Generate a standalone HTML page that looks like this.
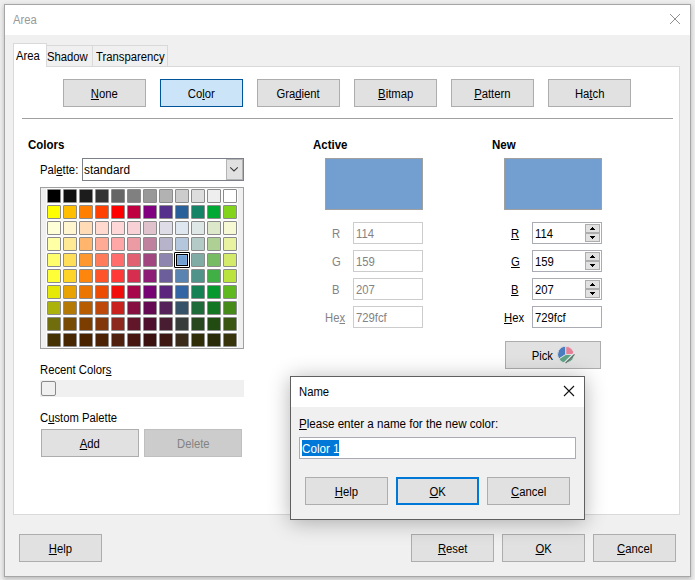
<!DOCTYPE html>
<html><head><meta charset="utf-8">
<style>
*{box-sizing:border-box;margin:0;padding:0}
html,body{width:695px;height:580px;overflow:hidden;background:#eeeeee;font-family:"Liberation Sans",sans-serif;font-size:11.5px;color:#000}
.a{position:absolute}
.t{position:absolute;white-space:nowrap;line-height:14px;font-size:12px;transform:scaleX(0.94);transform-origin:0 0}
.s{display:inline-block;transform:scaleX(0.94)}
.sl{display:inline-block;transform:scaleX(0.94);transform-origin:0 0}
.btn{position:absolute;background:#e1e1e1;border:1px solid #adadad;text-align:center;line-height:28px;height:28px;width:83px;white-space:nowrap;font-size:12px}
.u{text-decoration:underline;text-underline-offset:0.5px;text-decoration-thickness:1px}
.bold{font-weight:bold;font-size:12.5px;transform:scaleX(0.92);transform-origin:0 0}
.field{position:absolute;background:#fff;border:1px solid #a9acb3;height:22px;width:70px;line-height:22px;padding-left:2px;font-size:12px}
.dis{border-color:#cccccc;color:#838383}
.dt{color:#838383}
.sw{position:absolute;width:16px;height:16px;background:#fdfdfd;border-radius:2px}
.sw i{position:absolute;left:1px;top:1px;width:14px;height:14px;border:1px solid #8c8c8c;border-radius:1px}
.sp{position:absolute;left:585px;width:15px;height:9px;background:#e1e1e1;border:1px solid #adadad}
</style></head><body>
<!-- shadow / main window -->
<div class="a" style="left:4px;top:4px;width:687px;height:573px;border:1px solid #a6a6a6;background:#f0f0f0;box-shadow:0 1px 4px 1px rgba(0,0,0,0.1),0 3px 4px rgba(0,0,0,0.1)"></div>
<div class="a" style="left:5px;top:5px;width:685px;height:30px;background:#fff"></div>
<div class="t" style="left:13px;top:13px;color:#999">Area</div>
<svg class="a" style="left:669px;top:13px" width="12" height="12" viewBox="0 0 12 12"><path d="M1 1L11 11M11 1L1 11" stroke="#909090" stroke-width="1"/></svg>

<!-- tabs -->
<div class="a" style="left:13px;top:66px;width:667px;height:449px;background:#fff;border:1px solid #d9d9d9"></div>
<div class="a" style="left:46px;top:45px;width:47px;height:22px;background:#f0f0f0;border:1px solid #d9d9d9"></div>
<div class="a" style="left:92px;top:45px;width:76px;height:22px;background:#f0f0f0;border:1px solid #d9d9d9"></div>
<div class="a" style="left:13px;top:43px;width:34px;height:24px;background:#fff;border:1px solid #d9d9d9;border-bottom:none"></div>
<div class="t" style="left:16px;top:49px">Area</div>
<div class="t" style="left:47px;top:50px">Shadow</div>
<div class="t" style="left:96px;top:50px">Transparency</div>

<!-- type buttons -->
<div class="btn" style="left:63px;top:79px"><b class="s" style="font-weight:normal"><span class="u">N</span>one</b></div>
<div class="btn" style="left:160px;top:79px;background:#cce4f7;border-color:#005499"><b class="s" style="font-weight:normal">Co<span class="u">l</span>or</b></div>
<div class="btn" style="left:257px;top:79px"><b class="s" style="font-weight:normal">Gra<span class="u">d</span>ient</b></div>
<div class="btn" style="left:354px;top:79px"><b class="s" style="font-weight:normal"><span class="u">B</span>itmap</b></div>
<div class="btn" style="left:451px;top:79px"><b class="s" style="font-weight:normal"><span class="u">P</span>attern</b></div>
<div class="btn" style="left:548px;top:79px"><b class="s" style="font-weight:normal">Ha<span class="u">t</span>ch</b></div>
<div class="a" style="left:22px;top:118px;width:651px;height:1px;background:#a0a0a0"></div>

<!-- Colors -->
<div class="t bold" style="left:28px;top:138px">Colors</div>
<div class="t" style="left:40px;top:163px">Pal<span class="u">e</span>tte:</div>
<div class="a" style="left:82px;top:158px;width:162px;height:23px;background:#fff;border:1px solid #7b8089"></div>
<div class="t" style="left:84px;top:163px;transform:scaleX(0.985)">standard</div>
<div class="a" style="left:226px;top:159px;width:17px;height:21px;background:#e1e1e1;border:1px solid #b4b4b4"></div>
<svg class="a" style="left:229px;top:166px" width="10" height="7" viewBox="0 0 10 7"><path d="M1.2 1.4L5 5L8.8 1.4" stroke="#3a3a3a" fill="none" stroke-width="1.05"/></svg>

<div class="a" style="left:40px;top:187px;width:204px;height:162px;background:#f0f0f0;border:1px solid #a0a0a0"></div>
<div class="sw" style="left:46px;top:188px"><i style="background:#000000"></i></div>
<div class="sw" style="left:62px;top:188px"><i style="background:#111111"></i></div>
<div class="sw" style="left:78px;top:188px"><i style="background:#1c1c1c"></i></div>
<div class="sw" style="left:94px;top:188px"><i style="background:#333333"></i></div>
<div class="sw" style="left:110px;top:188px"><i style="background:#666666"></i></div>
<div class="sw" style="left:126px;top:188px"><i style="background:#808080"></i></div>
<div class="sw" style="left:142px;top:188px"><i style="background:#999999"></i></div>
<div class="sw" style="left:158px;top:188px"><i style="background:#b2b2b2"></i></div>
<div class="sw" style="left:174px;top:188px"><i style="background:#cccccc"></i></div>
<div class="sw" style="left:190px;top:188px"><i style="background:#dddddd"></i></div>
<div class="sw" style="left:206px;top:188px"><i style="background:#eeeeee"></i></div>
<div class="sw" style="left:222px;top:188px"><i style="background:#ffffff"></i></div>
<div class="sw" style="left:46px;top:204px"><i style="background:#ffff00"></i></div>
<div class="sw" style="left:62px;top:204px"><i style="background:#ffbf00"></i></div>
<div class="sw" style="left:78px;top:204px"><i style="background:#ff8000"></i></div>
<div class="sw" style="left:94px;top:204px"><i style="background:#ff4000"></i></div>
<div class="sw" style="left:110px;top:204px"><i style="background:#ff0000"></i></div>
<div class="sw" style="left:126px;top:204px"><i style="background:#bf0041"></i></div>
<div class="sw" style="left:142px;top:204px"><i style="background:#800080"></i></div>
<div class="sw" style="left:158px;top:204px"><i style="background:#55308d"></i></div>
<div class="sw" style="left:174px;top:204px"><i style="background:#2a6099"></i></div>
<div class="sw" style="left:190px;top:204px"><i style="background:#158466"></i></div>
<div class="sw" style="left:206px;top:204px"><i style="background:#00a933"></i></div>
<div class="sw" style="left:222px;top:204px"><i style="background:#81d41a"></i></div>
<div class="sw" style="left:46px;top:220px"><i style="background:#ffffd7"></i></div>
<div class="sw" style="left:62px;top:220px"><i style="background:#fff5ce"></i></div>
<div class="sw" style="left:78px;top:220px"><i style="background:#ffdbb6"></i></div>
<div class="sw" style="left:94px;top:220px"><i style="background:#ffd8ce"></i></div>
<div class="sw" style="left:110px;top:220px"><i style="background:#ffd7d7"></i></div>
<div class="sw" style="left:126px;top:220px"><i style="background:#f7d1d5"></i></div>
<div class="sw" style="left:142px;top:220px"><i style="background:#e0c2cd"></i></div>
<div class="sw" style="left:158px;top:220px"><i style="background:#dedce6"></i></div>
<div class="sw" style="left:174px;top:220px"><i style="background:#dee6ef"></i></div>
<div class="sw" style="left:190px;top:220px"><i style="background:#dee7e5"></i></div>
<div class="sw" style="left:206px;top:220px"><i style="background:#dde8cb"></i></div>
<div class="sw" style="left:222px;top:220px"><i style="background:#f6f9d4"></i></div>
<div class="sw" style="left:46px;top:236px"><i style="background:#ffffa6"></i></div>
<div class="sw" style="left:62px;top:236px"><i style="background:#ffe994"></i></div>
<div class="sw" style="left:78px;top:236px"><i style="background:#ffb66c"></i></div>
<div class="sw" style="left:94px;top:236px"><i style="background:#ffaa95"></i></div>
<div class="sw" style="left:110px;top:236px"><i style="background:#ffa6a6"></i></div>
<div class="sw" style="left:126px;top:236px"><i style="background:#ec9ba4"></i></div>
<div class="sw" style="left:142px;top:236px"><i style="background:#bf819e"></i></div>
<div class="sw" style="left:158px;top:236px"><i style="background:#b7b3ca"></i></div>
<div class="sw" style="left:174px;top:236px"><i style="background:#b4c7dc"></i></div>
<div class="sw" style="left:190px;top:236px"><i style="background:#b3cac7"></i></div>
<div class="sw" style="left:206px;top:236px"><i style="background:#afd095"></i></div>
<div class="sw" style="left:222px;top:236px"><i style="background:#e8f2a1"></i></div>
<div class="sw" style="left:46px;top:252px"><i style="background:#ffff6d"></i></div>
<div class="sw" style="left:62px;top:252px"><i style="background:#ffde59"></i></div>
<div class="sw" style="left:78px;top:252px"><i style="background:#ff972f"></i></div>
<div class="sw" style="left:94px;top:252px"><i style="background:#ff7b59"></i></div>
<div class="sw" style="left:110px;top:252px"><i style="background:#ff6d6d"></i></div>
<div class="sw" style="left:126px;top:252px"><i style="background:#e16173"></i></div>
<div class="sw" style="left:142px;top:252px"><i style="background:#a1467e"></i></div>
<div class="sw" style="left:158px;top:252px"><i style="background:#8e86ae"></i></div>
<div class="sw" style="left:174px;top:252px"><i style="background:#729fcf"></i></div>
<div class="sw" style="left:190px;top:252px"><i style="background:#81aca6"></i></div>
<div class="sw" style="left:206px;top:252px"><i style="background:#77bc65"></i></div>
<div class="sw" style="left:222px;top:252px"><i style="background:#d4ea6b"></i></div>
<div class="sw" style="left:46px;top:268px"><i style="background:#ffff38"></i></div>
<div class="sw" style="left:62px;top:268px"><i style="background:#ffd428"></i></div>
<div class="sw" style="left:78px;top:268px"><i style="background:#ff860d"></i></div>
<div class="sw" style="left:94px;top:268px"><i style="background:#ff5429"></i></div>
<div class="sw" style="left:110px;top:268px"><i style="background:#ff3838"></i></div>
<div class="sw" style="left:126px;top:268px"><i style="background:#d62e4e"></i></div>
<div class="sw" style="left:142px;top:268px"><i style="background:#8d1d75"></i></div>
<div class="sw" style="left:158px;top:268px"><i style="background:#6b5e9b"></i></div>
<div class="sw" style="left:174px;top:268px"><i style="background:#5983b0"></i></div>
<div class="sw" style="left:190px;top:268px"><i style="background:#50938a"></i></div>
<div class="sw" style="left:206px;top:268px"><i style="background:#3faf46"></i></div>
<div class="sw" style="left:222px;top:268px"><i style="background:#bbe33d"></i></div>
<div class="sw" style="left:46px;top:284px"><i style="background:#e6e905"></i></div>
<div class="sw" style="left:62px;top:284px"><i style="background:#e8a202"></i></div>
<div class="sw" style="left:78px;top:284px"><i style="background:#ea7500"></i></div>
<div class="sw" style="left:94px;top:284px"><i style="background:#ed4c05"></i></div>
<div class="sw" style="left:110px;top:284px"><i style="background:#f10d0c"></i></div>
<div class="sw" style="left:126px;top:284px"><i style="background:#a7074b"></i></div>
<div class="sw" style="left:142px;top:284px"><i style="background:#780373"></i></div>
<div class="sw" style="left:158px;top:284px"><i style="background:#5b277d"></i></div>
<div class="sw" style="left:174px;top:284px"><i style="background:#3465a4"></i></div>
<div class="sw" style="left:190px;top:284px"><i style="background:#168253"></i></div>
<div class="sw" style="left:206px;top:284px"><i style="background:#069a2e"></i></div>
<div class="sw" style="left:222px;top:284px"><i style="background:#5eb91e"></i></div>
<div class="sw" style="left:46px;top:300px"><i style="background:#acb20c"></i></div>
<div class="sw" style="left:62px;top:300px"><i style="background:#b47804"></i></div>
<div class="sw" style="left:78px;top:300px"><i style="background:#b85c00"></i></div>
<div class="sw" style="left:94px;top:300px"><i style="background:#be480a"></i></div>
<div class="sw" style="left:110px;top:300px"><i style="background:#c9211e"></i></div>
<div class="sw" style="left:126px;top:300px"><i style="background:#861141"></i></div>
<div class="sw" style="left:142px;top:300px"><i style="background:#650953"></i></div>
<div class="sw" style="left:158px;top:300px"><i style="background:#55215b"></i></div>
<div class="sw" style="left:174px;top:300px"><i style="background:#355269"></i></div>
<div class="sw" style="left:190px;top:300px"><i style="background:#1e6a39"></i></div>
<div class="sw" style="left:206px;top:300px"><i style="background:#127622"></i></div>
<div class="sw" style="left:222px;top:300px"><i style="background:#468a1a"></i></div>
<div class="sw" style="left:46px;top:316px"><i style="background:#706e0c"></i></div>
<div class="sw" style="left:62px;top:316px"><i style="background:#784b04"></i></div>
<div class="sw" style="left:78px;top:316px"><i style="background:#7b3d00"></i></div>
<div class="sw" style="left:94px;top:316px"><i style="background:#813709"></i></div>
<div class="sw" style="left:110px;top:316px"><i style="background:#8d281e"></i></div>
<div class="sw" style="left:126px;top:316px"><i style="background:#611729"></i></div>
<div class="sw" style="left:142px;top:316px"><i style="background:#4e102d"></i></div>
<div class="sw" style="left:158px;top:316px"><i style="background:#481d32"></i></div>
<div class="sw" style="left:174px;top:316px"><i style="background:#383d3c"></i></div>
<div class="sw" style="left:190px;top:316px"><i style="background:#28471f"></i></div>
<div class="sw" style="left:206px;top:316px"><i style="background:#224b12"></i></div>
<div class="sw" style="left:222px;top:316px"><i style="background:#395511"></i></div>
<div class="sw" style="left:46px;top:332px"><i style="background:#443205"></i></div>
<div class="sw" style="left:62px;top:332px"><i style="background:#472702"></i></div>
<div class="sw" style="left:78px;top:332px"><i style="background:#492300"></i></div>
<div class="sw" style="left:94px;top:332px"><i style="background:#4b2204"></i></div>
<div class="sw" style="left:110px;top:332px"><i style="background:#50200f"></i></div>
<div class="sw" style="left:126px;top:332px"><i style="background:#461711"></i></div>
<div class="sw" style="left:142px;top:332px"><i style="background:#3a110e"></i></div>
<div class="sw" style="left:158px;top:332px"><i style="background:#3d1711"></i></div>
<div class="sw" style="left:174px;top:332px"><i style="background:#3a2a1a"></i></div>
<div class="sw" style="left:190px;top:332px"><i style="background:#302d09"></i></div>
<div class="sw" style="left:206px;top:332px"><i style="background:#2a2c09"></i></div>
<div class="sw" style="left:222px;top:332px"><i style="background:#37330a"></i></div>
<div class="a" style="left:174px;top:252px;width:16px;height:16px;border:1px solid #000;background:#fff;border-radius:1px"></div>
<div class="a" style="left:176px;top:254px;width:12px;height:12px;border:1px solid #000;background:#729fcf;box-shadow:inset 0 0 0 1px #80ade2"></div>

<div class="t" style="left:40px;top:363px">Recent Color<span class="u">s</span></div>
<div class="a" style="left:40px;top:380px;width:204px;height:17px;background:#f0f0f0"></div>
<div class="a" style="left:41px;top:381px;width:15px;height:15px;border:1px solid #8a8a8a;border-radius:2px"></div>

<div class="t" style="left:40px;top:411px">C<span class="u">u</span>stom Palette</div>
<div class="btn" style="left:41px;top:429px;width:98px"><b class="s" style="font-weight:normal"><span class="u">A</span>dd</b></div>
<div class="btn dt" style="left:144px;top:429px;width:98px;background:#cccccc;border-color:#bfbfbf"><b class="s" style="font-weight:normal">Delete</b></div>

<!-- Active -->
<div class="t bold" style="left:313px;top:138px">Active</div>
<div class="a" style="left:325px;top:158px;width:98px;height:52px;background:#729fcf;border:1px solid #a0a0a0"></div>
<div class="t dt" style="left:332px;top:227px">R</div>
<div class="t dt" style="left:332px;top:255px">G</div>
<div class="t dt" style="left:332px;top:283px">B</div>
<div class="t dt" style="left:325px;top:311px">He<span class="u">x</span></div>
<div class="field dis" style="left:353px;top:222px"><span class="sl">114</span></div>
<div class="field dis" style="left:353px;top:250px"><span class="sl">159</span></div>
<div class="field dis" style="left:353px;top:278px"><span class="sl">207</span></div>
<div class="field dis" style="left:353px;top:306px"><span class="sl">729fcf</span></div>

<!-- New -->
<div class="t bold" style="left:492px;top:138px">New</div>
<div class="a" style="left:504px;top:158px;width:98px;height:52px;background:#729fcf;border:1px solid #a0a0a0"></div>
<div class="t" style="left:511px;top:227px"><span class="u">R</span></div>
<div class="t" style="left:511px;top:255px"><span class="u">G</span></div>
<div class="t" style="left:511px;top:283px"><span class="u">B</span></div>
<div class="t" style="left:504px;top:311px"><span class="u">H</span>ex</div>
<div class="field" style="left:532px;top:222px"><span class="sl">114</span></div>
<div class="field" style="left:532px;top:250px"><span class="sl">159</span></div>
<div class="field" style="left:532px;top:278px"><span class="sl">207</span></div>
<div class="field" style="left:532px;top:306px"><span class="sl">729fcf</span></div>
<div class="sp" style="top:224px"></div><div class="sp" style="top:233px"></div><svg class="a" style="left:589px;top:226px" width="7" height="14" shape-rendering="crispEdges"><rect x="3" y="1" width="1" height="1"/><rect x="2" y="2" width="3" height="1"/><rect x="1" y="3" width="5" height="1"/><rect x="0.5" y="3.5" width="6" height="0.5" fill-opacity="0"/><rect x="1" y="10" width="5" height="1"/><rect x="2" y="11" width="3" height="1"/><rect x="3" y="12" width="1" height="1"/></svg>
<div class="sp" style="top:252px"></div><div class="sp" style="top:261px"></div><svg class="a" style="left:589px;top:254px" width="7" height="14" shape-rendering="crispEdges"><rect x="3" y="1" width="1" height="1"/><rect x="2" y="2" width="3" height="1"/><rect x="1" y="3" width="5" height="1"/><rect x="0.5" y="3.5" width="6" height="0.5" fill-opacity="0"/><rect x="1" y="10" width="5" height="1"/><rect x="2" y="11" width="3" height="1"/><rect x="3" y="12" width="1" height="1"/></svg>
<div class="sp" style="top:280px"></div><div class="sp" style="top:289px"></div><svg class="a" style="left:589px;top:282px" width="7" height="14" shape-rendering="crispEdges"><rect x="3" y="1" width="1" height="1"/><rect x="2" y="2" width="3" height="1"/><rect x="1" y="3" width="5" height="1"/><rect x="0.5" y="3.5" width="6" height="0.5" fill-opacity="0"/><rect x="1" y="10" width="5" height="1"/><rect x="2" y="11" width="3" height="1"/><rect x="3" y="12" width="1" height="1"/></svg>

<div class="btn" style="left:505px;top:341px;width:96px;text-align:left;padding-left:25px"><b class="s" style="font-weight:normal">Pick</b></div>
<svg class="a" style="left:555px;top:344px" width="22" height="22" viewBox="0 0 22 22">
<path d="M10.8 10.5L10.8 2.3A8.2 8.2 0 0 0 3.9 15Z" fill="#4a7cc0" stroke="#e1e1e1" stroke-width="0.9"/>
<path d="M10.8 10.5L10.8 2.3A8.2 8.2 0 0 1 19 10.5Z" fill="#e67f97" stroke="#e1e1e1" stroke-width="0.9"/>
<path d="M10.8 10.5L19 10.5A8.2 8.2 0 0 1 3.9 15Z" fill="#5da487" stroke="#e1e1e1" stroke-width="0.9"/>
<path d="M18.6 9.6L9.4 18.8" stroke="#e8e8e8" stroke-width="1.4"/>
<path d="M19.5 10.3L10.6 19.2" stroke="#6a6a6a" stroke-width="1.2"/>
</svg>

<!-- bottom buttons -->
<div class="btn" style="left:19px;top:534px"><b class="s" style="font-weight:normal"><span class="u">H</span>elp</b></div>
<div class="btn" style="left:411px;top:534px"><b class="s" style="font-weight:normal"><span class="u">R</span>eset</b></div>
<div class="btn" style="left:502px;top:534px"><b class="s" style="font-weight:normal"><span class="u">O</span>K</b></div>
<div class="btn" style="left:593px;top:534px"><b class="s" style="font-weight:normal"><span class="u">C</span>ancel</b></div>

<!-- Name dialog -->
<div class="a" style="left:290px;top:376px;width:295px;height:144px;background:#f0f0f0;border:1px solid #5f5f5f;box-shadow:0 2px 20px rgba(0,0,0,0.3)"></div>
<div class="a" style="left:291px;top:377px;width:293px;height:30px;background:#fff"></div>
<div class="t" style="left:299px;top:385px">Name</div>
<svg class="a" style="left:563px;top:385px" width="12" height="12" viewBox="0 0 12 12"><path d="M1 1L11 11M11 1L1 11" stroke="#111" stroke-width="1.1"/></svg>
<div class="t" style="left:299px;top:417px;transform:scaleX(0.966)"><span class="u">P</span>lease enter a name for the new color:</div>
<div class="a" style="left:299px;top:437px;width:277px;height:22px;background:#fff;border:1px solid #a9acb3"></div>
<div class="a" style="left:302px;top:440px;width:37px;height:16px;background:#0078d7"></div>
<div class="t" style="left:301.5px;top:442px;color:#fff;transform:scaleX(0.97)">Color 1</div>
<div class="btn" style="left:305px;top:477px"><b class="s" style="font-weight:normal"><span class="u">H</span>elp</b></div>
<div class="btn" style="left:396px;top:477px;border:2px solid #0078d7;line-height:26px"><b class="s" style="font-weight:normal"><span class="u">O</span>K</b></div>
<div class="btn" style="left:487px;top:477px"><b class="s" style="font-weight:normal"><span class="u">C</span>ancel</b></div>
</body></html>
